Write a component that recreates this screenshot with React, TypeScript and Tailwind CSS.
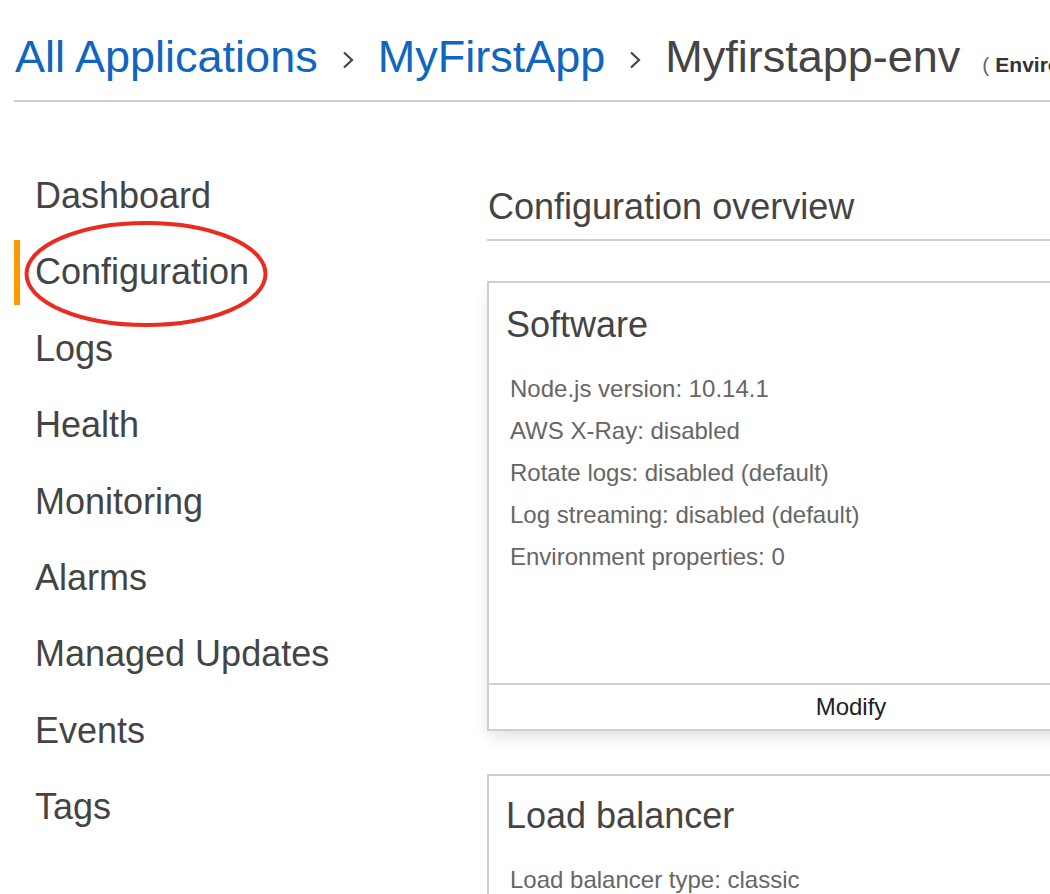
import React from 'react';

const navItems = [
  'Dashboard',
  'Configuration',
  'Logs',
  'Health',
  'Monitoring',
  'Alarms',
  'Managed Updates',
  'Events',
  'Tags',
];

const softwareLines = [
  'Node.js version: 10.14.1',
  'AWS X-Ray: disabled',
  'Rotate logs: disabled (default)',
  'Log streaming: disabled (default)',
  'Environment properties: 0',
];

function Chevron() {
  return (
    <svg className="mx-[24px] mt-[5px] self-center shrink-0" width="12" height="18" viewBox="0 0 12 18">
      <path d="M2 1.5 L10 9 L2 16.5" fill="none" stroke="#444" strokeWidth="2.2" />
    </svg>
  );
}

export default function App() {
  return (
    <div className="relative w-[1050px] h-[894px] overflow-hidden bg-white pl-[14px] font-['Liberation_Sans',Arial,sans-serif]">
      {/* Breadcrumb */}
      <div className="pt-[35px] ml-px flex h-[79px] items-baseline whitespace-nowrap leading-[44px] text-[45px]">
        <span className="text-[#0f65bf]">All Applications</span>
        <Chevron />
        <span className="text-[#0f65bf]">MyFirstApp</span>
        <Chevron />
        <span className="text-[#444]">Myfirstapp-env</span>
        <span className="ml-[22px] text-[21px] leading-[44px] text-[#333]">
          <span className="text-[#666] mr-[6px]">(</span>
          <span className="font-bold">Environment ID: e-mbyp3mxkqz</span>, URL: myfirstapp-env.elasticbeanstalk.com )
        </span>
      </div>
      <div className="mt-[21px] h-[2px] bg-[#cfcfcf]" />

      <div className="flex">
        {/* Sidebar */}
        <nav className="w-[473px] shrink-0 pt-[56px]">
          {navItems.map((item) => (
            <div key={item} className="flex h-[76.4px]">
              <div
                className={
                  item === 'Configuration'
                    ? 'w-[6px] my-[6px] bg-[#ff9900]'
                    : 'w-[6px] my-[6px]'
                }
              />
              <span className="pl-[15px] text-[36px] leading-[76.4px] text-[#444]">{item}</span>
            </div>
          ))}
        </nav>

        {/* Main */}
        <main className="flex-1 pt-[83px]">
          <h1 className="text-[36px] leading-[44px] text-[#444] pl-px">Configuration overview</h1>
          <div className="mt-[10px] h-[2px] bg-[#cfcfcf]" />

          <section className="mt-[40px] w-[728px] border-2 border-[#cfcfcf] bg-white shadow-[0_8px_14px_-2px_rgba(0,0,0,0.12)]">
            <div className="h-[400px] pt-[20px]">
              <h2 className="pl-[17px] text-[36px] leading-[44px] text-[#444]">Software</h2>
              <div className="mt-[21px] pl-[21px]">
                {softwareLines.map((line) => (
                  <div key={line} className="text-[24px] leading-[42px] text-[#666]">{line}</div>
                ))}
              </div>
            </div>
            <div className="h-[46px] border-t-2 border-[#cfcfcf] flex items-center justify-center text-[24px] text-[#222]">
              Modify
            </div>
          </section>

          <section className="mt-[43px] w-[728px] h-[400px] border-2 border-[#cfcfcf] bg-white pt-[18px]">
            <h2 className="pl-[17px] text-[36px] leading-[44px] text-[#444]">Load balancer</h2>
            <div className="mt-[21px] pl-[21px] text-[24px] leading-[42px] text-[#666]">Load balancer type: classic</div>
          </section>
        </main>
      </div>

      {/* Annotation ellipse */}
      <svg className="absolute left-[23px] top-[219px]" width="246" height="110" viewBox="0 0 246 110">
        <ellipse cx="123" cy="55" rx="119.5" ry="51" fill="none" stroke="#ec2b20" strokeWidth="4" />
      </svg>
    </div>
  );
}
